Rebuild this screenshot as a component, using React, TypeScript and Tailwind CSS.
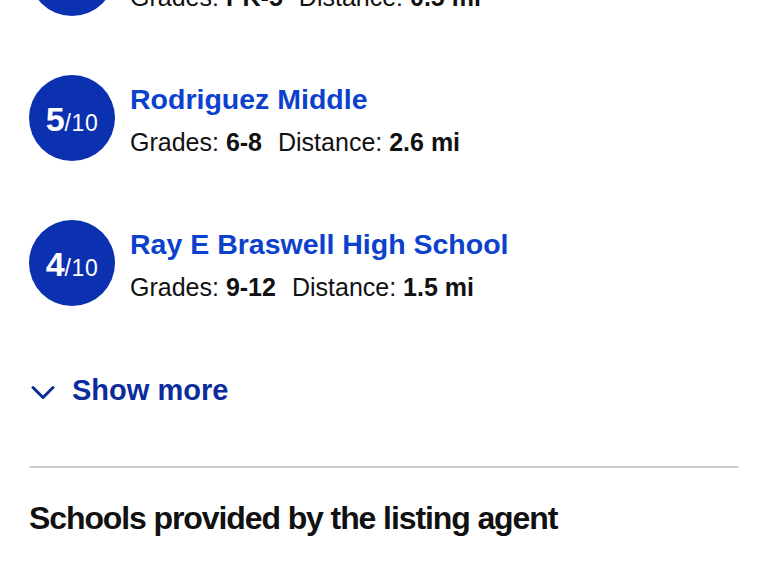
import React from "react";

type School = {
  name: string;
  rating: number;
  grades: string;
  distance: string;
};

const schools: School[] = [
  { name: "Lakeview Elementary", rating: 6, grades: "PK-5", distance: "0.5 mi" },
  { name: "Rodriguez Middle", rating: 5, grades: "6-8", distance: "2.6 mi" },
  { name: "Ray E Braswell High School", rating: 4, grades: "9-12", distance: "1.5 mi" },
];

function SchoolRow({ school }: { school: School }) {
  return (
    <div className="flex items-start gap-[15px]">
      <div className="w-[86px] h-[86px] shrink-0 rounded-full bg-[#0b31b0] text-white flex items-center justify-center">
        <span className="leading-none whitespace-nowrap pt-[2px]">
          <span className="text-[34px] font-bold">{school.rating}</span>
          <span className="text-[23px] tracking-[0.6px]">/10</span>
        </span>
      </div>
      <div className="pt-[8px]">
        <div className="text-[28.5px] leading-[32px] font-bold text-[#0b41cd] whitespace-nowrap">
          {school.name}
        </div>
        <div className="mt-[12px] text-[25px] leading-[30px] text-[#111] whitespace-nowrap">
          Grades: <span className="font-bold">{school.grades}</span>
          <span className="ml-[16px]">Distance: </span>
          <span className="font-bold">{school.distance}</span>
        </div>
      </div>
    </div>
  );
}

export default function App() {
  return (
    <div
      className="w-full h-[576px] overflow-hidden bg-white px-[29px]"
      style={{ fontFamily: '"Liberation Sans", Arial, sans-serif' }}
    >
      <div className="mt-[-70px] flex flex-col gap-[59px]">
        {schools.map((s) => (
          <SchoolRow key={s.name} school={s} />
        ))}
      </div>

      <button className="mt-[68px] flex items-center gap-[17px] text-[#0b2d9c]">
        <svg
          width="24"
          height="15"
          viewBox="0 0 24 15"
          fill="none"
          stroke="currentColor"
          strokeWidth="3"
          strokeLinecap="round"
          strokeLinejoin="round"
          className="ml-[2px] mt-[4px]"
        >
          <path d="M2 2.5 L12 12.5 L22 2.5" />
        </svg>
        <span className="text-[29px] leading-[32px] font-bold">Show more</span>
      </button>

      <div className="mt-[60px] h-[2px] bg-[#cfcfcf]" />

      <h2 className="mt-[32px] text-[32px] leading-[36px] font-bold tracking-[-1.1px] text-[#111] whitespace-nowrap">
        Schools provided by the listing agent
      </h2>
    </div>
  );
}
